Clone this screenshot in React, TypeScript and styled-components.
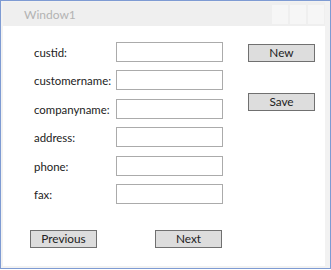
import { Fragment } from "react";
import styled, { createGlobalStyle } from "styled-components";

const GlobalStyle = createGlobalStyle`
  html, body {
    margin: 0;
    padding: 0;
    background: #ffffff;
  }
  body {
    font-family: Lato, "Open Sans", "Liberation Sans", sans-serif;
  }
`;

const WindowFrame = styled.div`
  box-sizing: border-box;
  width: 331px;
  height: 269px;
  border: 1px solid #7e9bd3;
  background: #f2f2f2;
  display: flex;
  flex-direction: column;
  padding: 1px 5px 2px 2px;
`;

const TitleBar = styled.div`
  height: 24px;
  display: flex;
  align-items: center;
  justify-content: space-between;
  background: #efefef;
`;

const Title = styled.span`
  margin-left: 21px;
  font-size: 12px;
  color: #b3b3b3;
`;

const Caption = styled.div`
  display: flex;
  gap: 2px;
  margin-right: 1px;
`;

const CaptionButton = styled.div`
  width: 16px;
  height: 19px;
  background: #f6f6f6;
`;

const Client = styled.div`
  flex: 1;
  background: #ffffff;
  padding: 16px 0 0 31px;
  display: flex;
  flex-direction: column;
`;

const Top = styled.div`
  display: flex;
`;

const Form = styled.div`
  display: grid;
  grid-template-columns: 82px 107px;
  grid-auto-rows: 20px;
  row-gap: 8.4px;
`;

const Label = styled.label`
  font-size: 11.4px;
  color: #222222;
  display: flex;
  align-items: center;
  padding-top: 1px;
  white-space: nowrap;
`;

const Box = styled.div`
  box-sizing: border-box;
  border: 1px solid #ababab;
  background: #ffffff;
`;

const Side = styled.div`
  display: flex;
  flex-direction: column;
  margin-left: 25px;
  padding-top: 2px;
  gap: 31px;
`;

const Button = styled.button<{ $w: number }>`
  box-sizing: border-box;
  width: ${(p) => p.$w}px;
  height: 18px;
  padding: 0;
  border: 1px solid #707070;
  background: #dddddd;
  font-family: inherit;
  font-size: 11.8px;
  color: #222222;
  line-height: 16px;
`;

const Nav = styled.div`
  display: flex;
  gap: 58px;
  margin-top: 26px;
  margin-left: -4px;
`;

const fields = ["custid:", "customername:", "companyname:", "address:", "phone:", "fax:"];

export default function App() {
  return (
    <>
      <GlobalStyle />
      <WindowFrame>
        <TitleBar>
          <Title>Window1</Title>
          <Caption>
            <CaptionButton />
            <CaptionButton />
            <CaptionButton />
          </Caption>
        </TitleBar>
        <Client>
          <Top>
            <Form>
              {fields.map((f) => (
                <Fragment key={f}>
                  <Label>{f}</Label>
                  <Box />
                </Fragment>
              ))}
            </Form>
            <Side>
              <Button $w={67}>New</Button>
              <Button $w={67}>Save</Button>
            </Side>
          </Top>
          <Nav>
            <Button $w={67}>Previous</Button>
            <Button $w={67}>Next</Button>
          </Nav>
        </Client>
      </WindowFrame>
    </>
  );
}
